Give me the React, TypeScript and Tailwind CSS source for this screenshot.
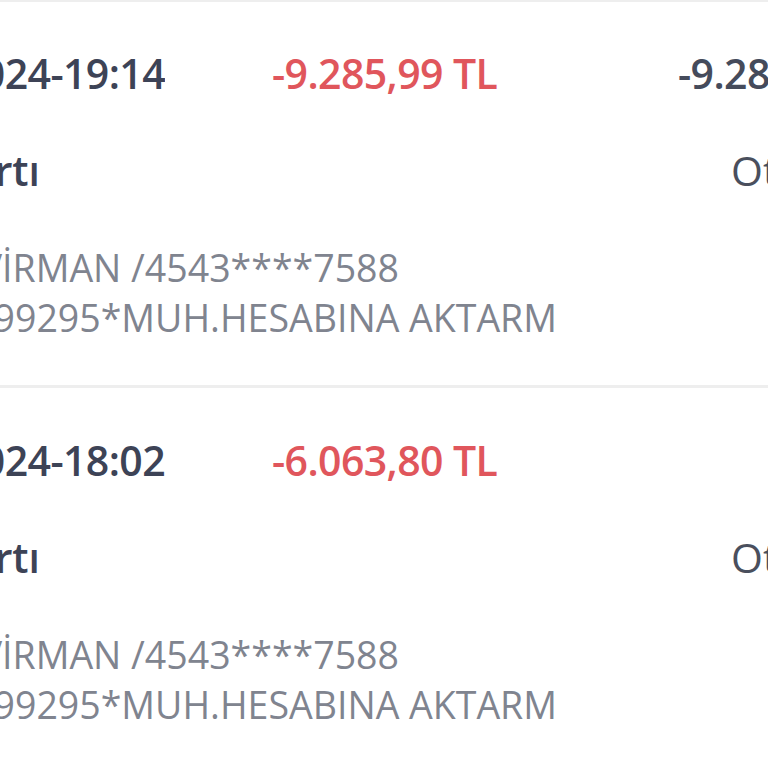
import React from "react";

const font = { fontFamily: '"Open Sans", "Noto Sans", sans-serif' };

function Item({ date, amount, balance }: { date: string; amount: string; balance?: string }) {
  return (
    <div className="flex flex-col">
      <div className="flex items-start overflow-hidden whitespace-nowrap text-[41px] leading-[56px] font-semibold tracking-[-0.6px]">
        <div className="w-[165px] shrink-0 flex justify-end overflow-hidden">
          <span className="shrink-0 text-[#3d4356]">{date}</span>
        </div>
        <div className="w-[107px] shrink-0" />
        <div className="w-[406px] shrink-0 text-[#e0565c]">{amount}</div>
        {balance && <div className="shrink-0 text-[#454b5b]">{balance}</div>}
      </div>
      <div className="mt-[41px] flex items-start overflow-hidden whitespace-nowrap text-[41px] leading-[56px]">
        <div className="w-[40px] shrink-0 flex justify-end overflow-hidden">
          <span className="shrink-0 font-semibold text-[#3d4356]">Kredi Kartı</span>
        </div>
        <div className="w-[691px] shrink-0" />
        <div className="shrink-0 text-[#4a4f5d]">Otomatik</div>
      </div>
      <div className="mt-[45px] flex flex-col text-[37.5px] leading-[50px] font-normal text-[#80848f] whitespace-nowrap">
        <div className="w-[399px] flex justify-end overflow-hidden">
          <span className="shrink-0">KART VİRMAN /4543****7588</span>
        </div>
        <div className="w-[557px] flex justify-end overflow-hidden">
          <span className="shrink-0">1099295*MUH.HESABINA AKTARM</span>
        </div>
      </div>
    </div>
  );
}

export default function App() {
  return (
    <div className="w-[768px] h-[768px] bg-white overflow-hidden" style={font}>
      <div className="h-[2px] bg-[#eeeeee]" />
      <div className="pt-[43px] pb-[42px]">
        <Item date="16.05.2024-19:14" amount="-9.285,99 TL" balance="-9.285,99 TL" />
      </div>
      <div className="h-[3px] bg-[#eeeeee]" />
      <div className="pt-[44px] pb-[42px]">
        <Item date="16.05.2024-18:02" amount="-6.063,80 TL" />
      </div>
    </div>
  );
}
